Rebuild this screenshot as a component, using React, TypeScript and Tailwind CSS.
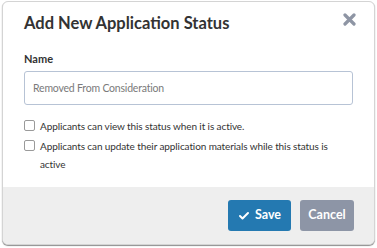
import { Check } from "lucide-react";

function CloseIcon() {
  return (
    <svg width="13" height="13" viewBox="0 0 13 13" aria-hidden="true">
      <path d="M2 2 L11 11 M11 2 L2 11" stroke="#8e95a4" strokeWidth="3.2" strokeLinecap="round" />
    </svg>
  );
}

function CheckRow({ label }: { label: string }) {
  return (
    <label className="flex items-start gap-[5px]">
      <span className="mt-[3px] w-[11px] h-[11px] shrink-0 rounded-[2px] border border-[#9a9a9a] bg-white" />
      <span className="text-[10px] tracking-[-0.1px] leading-[18px] text-[#333]">{label}</span>
    </label>
  );
}

export default function App() {
  return (
    <div className="w-[377px] h-[248px] bg-white pl-[2px] pr-[2px] pt-px" style={{ fontFamily: "Lato, 'Open Sans', sans-serif" }}>
      <div className="h-[244px] flex flex-col rounded-[6px] border border-[#d4d4d4] shadow-[0_1px_1px_rgba(0,0,0,0.45)] overflow-hidden bg-white">
        <div className="flex items-start justify-between pl-[21px] pr-[18px] pt-[10px]">
          <h1 className="text-[16.5px] font-bold text-[#333] leading-[22px]">Add New Application Status</h1>
          <button className="mt-[1px]"><CloseIcon /></button>
        </div>
        <div className="flex-1 px-[21px] pt-[18px]">
          <div className="text-[11px] font-bold text-[#333] leading-[14px]">Name</div>
          <input
            className="mt-[5px] w-full h-[34px] rounded-[3px] border border-[#b7c3d5] px-[8px] text-[10.5px] tracking-[-0.2px] text-[#444] placeholder:text-[#7a7a7a] outline-none"
            placeholder="Removed From Consideration"
          />
          <div className="mt-[12px] flex flex-col gap-[2px]">
            <CheckRow label="Applicants can view this status when it is active." />
            <CheckRow label="Applicants can update their application materials while this status is active" />
          </div>
        </div>
        <div className="h-[57px] bg-[#eeeeee] flex items-center justify-end gap-[9px] pr-[20px]">
          <button className="h-[31px] w-[63px] rounded-[3px] bg-[#2479b1] text-white text-[12.5px] font-bold flex items-center justify-center gap-[5px]">
            <Check size={12} strokeWidth={4} />
            Save
          </button>
          <button className="h-[31px] w-[54px] rounded-[3px] bg-[#8d95a6] text-white text-[12.5px] font-bold">Cancel</button>
        </div>
      </div>
    </div>
  );
}
